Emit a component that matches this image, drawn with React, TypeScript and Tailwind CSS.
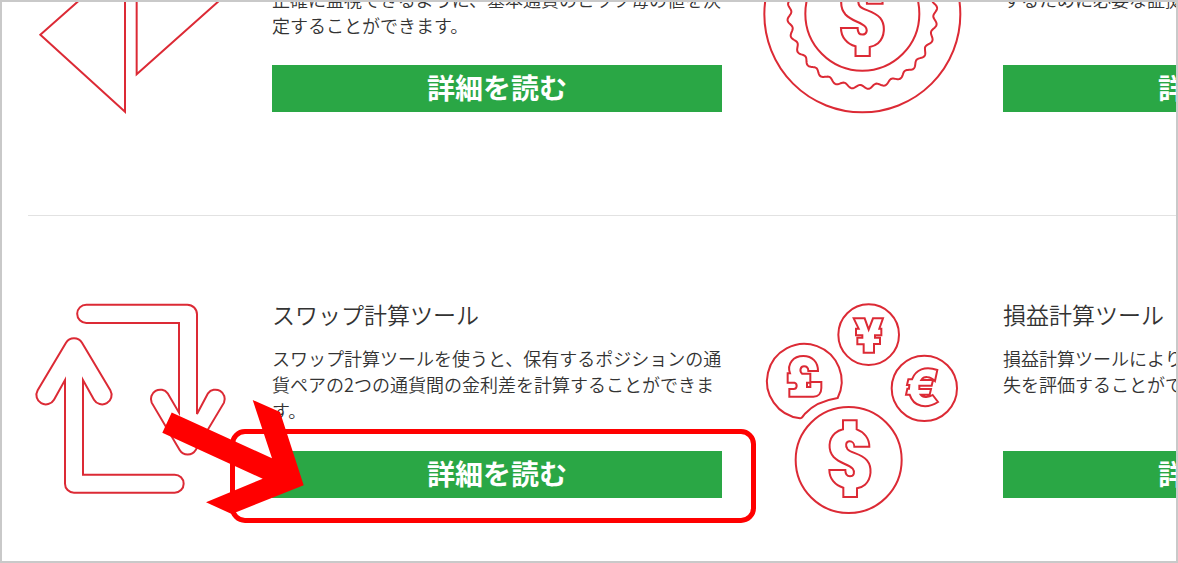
import type { ReactNode } from "react";

const DOLLAR =
	"M264 375H305V402C328 410 343 430 343 454H298C298 445 292 438 284 438C272 438 270 452 278 462C290 474 318 474 336 495C352 515 350 550 330 568C322 575 315 577 306 579V605H265V577C240 570 223 550 223 524H271C271 536 276 543 285 543C297 543 301 530 293 520C280 506 255 505 236 485C218 465 220 432 240 414C248 407 255 404 264 402Z";

// milled edge of the coin
const ridge = Array.from({ length: 561 }, (_, i) => {
	const a = (i / 560) * Math.PI * 2;
	const r = 219 + 6 * Math.cos(28 * (a - Math.PI / 2 - 0.03) + Math.PI);
	return `${(367 + r * Math.cos(a)).toFixed(1)} ${(42 + r * Math.sin(a)).toFixed(1)}`;
}).join("L");

function Icon(props: { viewBox: string; tall?: boolean; children: ReactNode }) {
	return (
		<svg
			viewBox={props.viewBox}
			fill="none"
			stroke="#dc2a35"
			strokeWidth="6"
			aria-hidden="true"
			className={`w-52 shrink-0 ${props.tall ? "mt-px h-[214px]" : "h-[130px]"}`}
		>
			{props.children}
		</svg>
	);
}

function TrianglesIcon() {
	return (
		<Icon viewBox="84 -42 624 390">
			<path d="M375 -120V335L121 104Z" />
			<path d="M410 -120V223L790 -116" />
		</Icon>
	);
}

function CoinIcon() {
	return (
		<Icon viewBox="57 -42 624 390">
			<circle cx="367" cy="43" r="294" />
			<path d={`M${ridge}Z`} />
			<circle cx="367" cy="41" r="171" />
			<path d={DOLLAR} transform="translate(71 -461) scale(1.04)" />
		</Icon>
	);
}

function SwapIcon() {
	return (
		<Icon viewBox="24 33 624 642" tall>
			<path d="M199 44H502A29 29 0 0 1 531 73V372L564 310A28 28 0 0 1 612 338L527 480A28 28 0 0 1 479 480L395 338A28 28 0 0 1 443 310L477 368V99H199A27.5 27.5 0 0 1 199 44Z" />
			<path d="M138 158A28 28 0 0 1 186 158L271 301A28 28 0 0 1 222 329L189 270V554H464A27 27 0 0 1 464 608H162A27 27 0 0 1 135 581V270L102 329A28 28 0 0 1 53 301Z" />
		</Icon>
	);
}

function CurrenciesIcon() {
	return (
		<Icon viewBox="12 17 624 642" tall>
			<circle cx="341" cy="118" r="91" />
			<path d="M296 69H329L341 103L354 69H384L373 100H379V120H360V127H375V146H357V172H326V147H307V127H322V120H303V100H311Z" />
			<circle cx="508" cy="279" r="98" />
			<path d="M547 224C510 211 482 223 471 252H460L456 269H463L462 280H457L453 298H464C476 336 515 342 549 320L533 299C520 308 502 306 497 298H524L528 281H493V271H530L534 254H499C506 242 526 242 540 257Z" />
			<path d="M135 369A112 112 0 1 1 248 308C210 314 175 327 149 356C144 363 140 370 135 369Z" />
			<path d="M103 304V281H116C126 281 129 266 118 262H98V234H105C95 205 115 182 145 182C172 182 189 200 189 227H160C160 217 154 213 147 213C137 213 132 226 141 235H166V262H156V275H166V260H199V278C199 294 190 304 175 304Z" />
			<circle cx="281" cy="494" r="159" />
			<path d={DOLLAR} />
		</Icon>
	);
}

function Highlight() {
	return (
		<div className="pointer-events-none" aria-hidden="true">
			<div className="absolute -top-[22px] -right-[34px] -bottom-[25px] -left-[42px] rounded-[15px] border-5 border-[#ff0000]" />
			<svg
				viewBox="160 398 146 118"
				className="absolute -top-[53px] -left-28 h-[118px] w-[146px]"
			>
				<path
					fill="#ff0000"
					d="M171.7 412.5L272 458.3L252.7 400L280 412L303.7 485.3L231.7 514L206 502.3L262.7 478.7L162.3 432.7Z"
				/>
			</svg>
		</div>
	);
}

function ToolCard(props: {
	icon: ReactNode;
	title?: string;
	highlighted?: boolean;
	children: ReactNode;
}) {
	return (
		<article className="flex items-start gap-9">
			{props.icon}
			<div className="min-w-0 flex-1">
				{props.title && (
					<h3 className="mb-[17px] text-[23px] leading-7 font-[350]">
						{props.title}
					</h3>
				)}
				<p
					className={`text-[18px] leading-[26px] font-[350] ${props.title ? "mb-7 min-h-[78px]" : "mb-[27px] min-h-[52px]"}`}
				>
					{props.children}
				</p>
				<div className="relative">
					<a
						href="#"
						className="block bg-[#2aa745] pt-0.5 pb-[5px] text-center text-[28px] leading-10 font-bold text-white"
					>
						詳細を読む
					</a>
					{props.highlighted && <Highlight />}
				</div>
			</div>
		</article>
	);
}

export default function App() {
	return (
		<main
			lang="ja"
			className="min-h-screen overflow-hidden border-2 border-[#c9c9c9] bg-white pl-[26px] font-['Noto_Sans_CJK_JP',sans-serif] text-[#333]"
		>
			<div className="min-w-[1425px]">
				<section className="-mt-4 grid grid-cols-2 gap-x-[37px] border-b border-[#e2e2e2] pb-[99px]">
					<ToolCard icon={<TrianglesIcon />}>
						正確に監視できるように、基本通貨のピップ毎の値を決定することができます。
					</ToolCard>
					<ToolCard icon={<CoinIcon />}>するために必要な証拠</ToolCard>
				</section>
				<section className="grid grid-cols-2 gap-x-[37px] pt-[84px] pb-10">
					<ToolCard
						icon={<SwapIcon />}
						title="スワップ計算ツール"
						highlighted
					>
						スワップ計算ツールを使うと、保有するポジションの通貨ペアの2つの通貨間の金利差を計算することができます。
					</ToolCard>
					<ToolCard icon={<CurrenciesIcon />} title="損益計算ツール">
						損益計算ツールにより
						<br />
						失を評価することがで
					</ToolCard>
				</section>
			</div>
		</main>
	);
}
